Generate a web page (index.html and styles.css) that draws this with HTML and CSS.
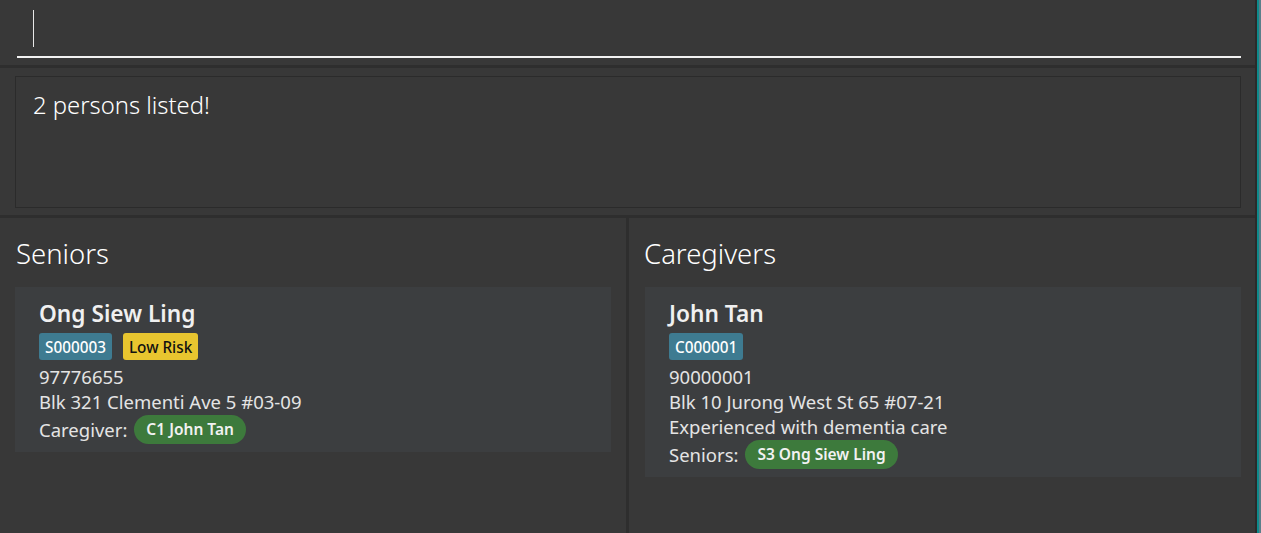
FILE: index.html
```html
<!DOCTYPE html>
<html>
<head>
<meta charset="utf-8">
<link rel="stylesheet" href="styles.css">
</head>
<body>
<div class="app">
  <div class="main">
    <div class="command">
      <div class="command-field"><span class="caret"></span></div>
    </div>
    <div class="sep"></div>
    <div class="result">
      <div class="result-box">2 persons listed!</div>
    </div>
    <div class="sep"></div>
    <div class="panels">
      <div class="panel panel-left">
        <div class="panel-title">Seniors</div>
        <div class="card">
          <div class="name">Ong Siew Ling</div>
          <div class="tags">
            <span class="tag tag-id">S000003</span>
            <span class="tag tag-risk">Low Risk</span>
          </div>
          <div class="line">97776655</div>
          <div class="line">Blk 321 Clementi Ave 5 #03-09</div>
          <div class="line link-row"><span>Caregiver:</span><span class="pill">C1 John Tan</span></div>
        </div>
      </div>
      <div class="vdivider"></div>
      <div class="panel panel-right">
        <div class="panel-title">Caregivers</div>
        <div class="card">
          <div class="name">John Tan</div>
          <div class="tags">
            <span class="tag tag-id">C000001</span>
          </div>
          <div class="line">90000001</div>
          <div class="line">Blk 10 Jurong West St 65 #07-21</div>
          <div class="line">Experienced with dementia care</div>
          <div class="line link-row"><span>Seniors:</span><span class="pill">S3 Ong Siew Ling</span></div>
        </div>
      </div>
    </div>
  </div>
  <div class="edge">
    <div class="edge-dark"></div>
    <div class="edge-teal"></div>
    <div class="edge-noise"></div>
  </div>
</div>
</body>
</html>
```
FILE: styles.css
```css
html, body {
  margin: 0;
  padding: 0;
}
body {
  background: #383838;
  font-family: "Noto Sans", "Open Sans", sans-serif;
  color: #e6e6e6;
  overflow: hidden;
}
.app {
  display: flex;
  width: 1261px;
  height: 533px;
}
.main {
  width: 1255px;
  display: flex;
  flex-direction: column;
}
.command {
  height: 65px;
  padding: 0 14px 0 17px;
  box-sizing: border-box;
}
.command-field {
  height: 58px;
  border-bottom: 2px solid #f2f2f2;
  box-sizing: border-box;
  padding: 10px 0 0 16px;
}
.caret {
  display: block;
  width: 1px;
  height: 37px;
  background: #e8e8e8;
}
.sep {
  height: 3px;
  background: #2e2e2e;
}
.result {
  height: 147px;
  padding: 8px 14px 7px 15px;
  box-sizing: border-box;
}
.result-box {
  height: 132px;
  border: 1px solid #2b2b2b;
  box-sizing: border-box;
  padding: 13px 17px;
  font-size: 23.8px;
  font-weight: 300;
  color: #ffffff;
  line-height: 30px;
}
.panels {
  flex: 1;
  display: flex;
}
.panel {
  display: flex;
  flex-direction: column;
  align-items: flex-start;
}
.panel-left {
  width: 626px;
  padding: 0 15px;
  box-sizing: border-box;
}
.panel-right {
  flex: 1;
  padding: 0 14px 0 16px;
  box-sizing: border-box;
}
.vdivider {
  width: 3px;
  background: #2e2e2e;
}
.panel-title {
  font-size: 27.5px;
  font-weight: 300;
  color: #ffffff;
  height: 69px;
  line-height: 36px;
  padding-top: 18px;
  box-sizing: border-box;
}
.panel-left .panel-title {
  padding-left: 1px;
}
.panel-right .panel-title {
  margin-left: -1px;
}
.card {
  align-self: stretch;
  background: #3c3e40;
  padding: 12px 24px 8px 24px;
}
.name {
  font-size: 22.7px;
  font-weight: 600;
  color: #f0f0f0;
  line-height: 30px;
  margin-bottom: 4px;
}
.tags {
  display: flex;
  gap: 11px;
  height: 27px;
  margin-bottom: 4px;
}
.tag {
  display: flex;
  align-items: center;
  padding: 0 6px;
  border-radius: 3px;
  font-size: 15.3px;
  font-weight: 500;
  height: 27px;
}
.tag-id {
  background: #3e7b91;
  color: #ffffff;
}
.tag-risk {
  background: #e8c52f;
  color: #111111;
}
.line {
  font-size: 18.5px;
  line-height: 25px;
  color: #e4e4e4;
}
.link-row {
  display: flex;
  align-items: center;
  gap: 7px;
  height: 30px;
}
.pill {
  display: flex;
  align-items: center;
  height: 29px;
  padding: 0 12px;
  border-radius: 15px;
  background: #3d7a3c;
  color: #f2f2f2;
  font-size: 15.5px;
  font-weight: 600;
}
.edge {
  flex: 1;
  display: flex;
}
.edge-dark {
  width: 2px;
  background: #2b2b2b;
}
.edge-teal {
  width: 2px;
  background: #0e8a8c;
}
.edge-noise {
  flex: 1;
  background: #5a7f8a;
}
```
